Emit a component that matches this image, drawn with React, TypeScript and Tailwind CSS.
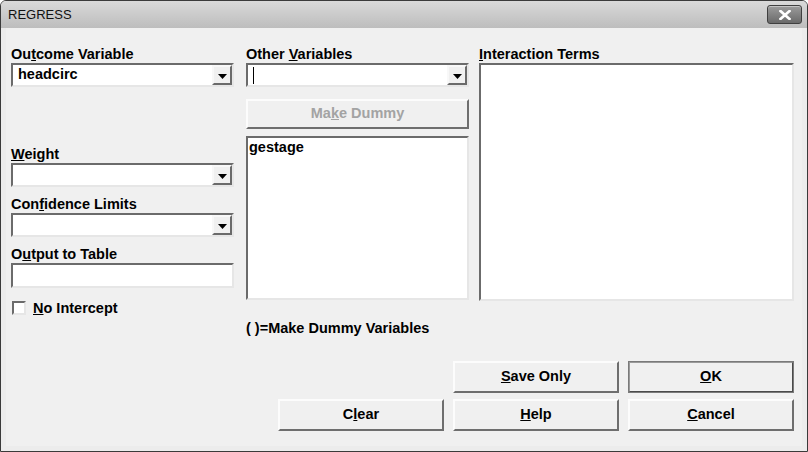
import React from "react";

const font = { fontFamily: '"Liberation Sans", Arial, sans-serif' };

function Arrow() {
  return (
    <svg width="9" height="5" viewBox="0 0 9 5">
      <path d="M0 0 H9 L4.5 5 Z" fill="#000" />
    </svg>
  );
}

function Combo({ value, caret }: { value?: string; caret?: boolean }) {
  return (
    <div className="flex h-[24px] w-full border-2 border-t-[#6b6b6b] border-l-[#6b6b6b] border-b-[#e6e6e6] border-r-[#e6e6e6] bg-white">
      <div className="flex flex-1 items-center pl-[5px] text-[14.5px] font-bold text-black">
        {caret ? <span className="block h-[17px] w-px bg-black" /> : value}
      </div>
      <div className="flex h-[20px] w-[20px] items-center justify-center border-2 border-t-[#f8f8f8] border-l-[#f8f8f8] border-b-[#6a6a6a] border-r-[#6a6a6a] bg-[#f0f0f0] pt-[2px]">
        <Arrow />
      </div>
    </div>
  );
}

function Label({ children }: { children: React.ReactNode }) {
  return <div className="h-[16px] text-[14.5px] font-bold leading-[16px] text-black">{children}</div>;
}

function Btn({
  children,
  def,
  disabled,
  className,
}: {
  children: React.ReactNode;
  def?: boolean;
  disabled?: boolean;
  className?: string;
}) {
  return (
    <div
      className={
        "flex items-center justify-center border-2 bg-[#f0f0f0] text-[14.5px] font-bold " +
        (def
          ? "border-t-[#9a9a9a] border-l-[#9a9a9a] border-b-[#4a4a4a] border-r-[#4a4a4a] outline outline-1 outline-[#7a7a7a] -outline-offset-1 "
          : "border-t-[#fcfcfc] border-l-[#fcfcfc] border-b-[#6e6e6e] border-r-[#6e6e6e] ") +
        (disabled ? "text-[#a3a3a3] " : "text-black ") +
        (className ?? "")
      }
    >
      <span>{children}</span>
    </div>
  );
}

export default function App() {
  return (
    <div
      style={font}
      className="flex h-[452px] w-[808px] flex-col overflow-hidden rounded-t-[6px] border border-[#3a3a3a] bg-[#f0f0f0]"
    >
      <div className="flex h-[27px] items-center justify-between bg-gradient-to-b from-[#d9d9d9] to-[#bdbdbd] pl-[7px] pr-[5px]">
        <span className="text-[13px] text-[#111]">REGRESS</span>
        <div className="flex h-[19px] w-[35px] items-center justify-center rounded-[3px] border border-[#3f3f3f] bg-gradient-to-b from-[#9c9c9c] to-[#6a6a6a] shadow-[inset_0_1px_0_#c4c4c4]">
          <svg width="12" height="10" viewBox="0 0 12 10">
            <path d="M1.5 1 L10.5 9 M10.5 1 L1.5 9" stroke="#fff" strokeWidth="2.6" strokeLinecap="square" />
          </svg>
        </div>
      </div>

      <div className="flex flex-1 flex-col border-l-[5px] border-r-[5px] border-b-[5px] border-[#ececec] pl-[5px] pr-[8px]">
        <div className="flex pt-[18px]">
          <div className="flex w-[223px] flex-col">
            <Label>
              Ou<u>t</u>come Variable
            </Label>
            <div className="mt-[1px]">
              <Combo value="headcirc" />
            </div>
            <div className="mt-[59px]">
              <Label>
                <u>W</u>eight
              </Label>
            </div>
            <div className="mt-[1px]">
              <Combo />
            </div>
            <div className="mt-[9px]">
              <Label>
                Con<u>f</u>idence Limits
              </Label>
            </div>
            <div className="mt-[1px]">
              <Combo />
            </div>
            <div className="mt-[9px]">
              <Label>
                O<u>u</u>tput to Table
              </Label>
            </div>
            <div className="mt-[1px] h-[25px] w-full border-2 border-t-[#6b6b6b] border-l-[#6b6b6b] border-b-[#e6e6e6] border-r-[#e6e6e6] bg-white" />
            <div className="mt-[12px] flex items-center">
              <div className="ml-[1px] h-[14px] w-[14px] border-2 border-t-[#6b6b6b] border-l-[#6b6b6b] border-b-[#e6e6e6] border-r-[#e6e6e6] bg-white" />
              <span className="ml-[7px] text-[14.5px] font-bold leading-[16px] text-black">
                <u>N</u>o Intercept
              </span>
            </div>
          </div>

          <div className="ml-[12px] flex w-[223px] flex-col">
            <Label>
              Other <u>V</u>ariables
            </Label>
            <div className="mt-[1px]">
              <Combo caret />
            </div>
            <Btn disabled className="mt-[12px] h-[30px]">
              Ma<u>k</u>e Dummy
            </Btn>
            <div className="mt-[7px] h-[164px] border-2 border-t-[#6b6b6b] border-l-[#6b6b6b] border-b-[#e6e6e6] border-r-[#e6e6e6] bg-white pl-[1px] pt-[1px] text-[14.5px] font-bold leading-[16px] text-black">
              gestage
            </div>
            <div className="mt-[20px] text-[14.5px] font-bold leading-[16px] text-black">( )=Make Dummy Variables</div>
          </div>

          <div className="ml-[10px] flex w-[315px] flex-col">
            <Label>
              <u>I</u>nteraction Terms
            </Label>
            <div className="mt-[1px] h-[238px] border-2 border-t-[#6b6b6b] border-l-[#6b6b6b] border-b-[#e6e6e6] border-r-[#e6e6e6] bg-white" />
          </div>
        </div>

        <div className="mt-[25px] flex flex-col items-end gap-[6px]">
          <div className="flex gap-[9px]">
            <Btn className="h-[32px] w-[166px]">
              <u>S</u>ave Only
            </Btn>
            <Btn def className="h-[32px] w-[166px]">
              <u>O</u>K
            </Btn>
          </div>
          <div className="flex gap-[9px]">
            <Btn className="h-[32px] w-[166px]">
              C<u>l</u>ear
            </Btn>
            <Btn className="h-[32px] w-[166px]">
              <u>H</u>elp
            </Btn>
            <Btn className="h-[32px] w-[166px]">
              <u>C</u>ancel
            </Btn>
          </div>
        </div>
      </div>
    </div>
  );
}
